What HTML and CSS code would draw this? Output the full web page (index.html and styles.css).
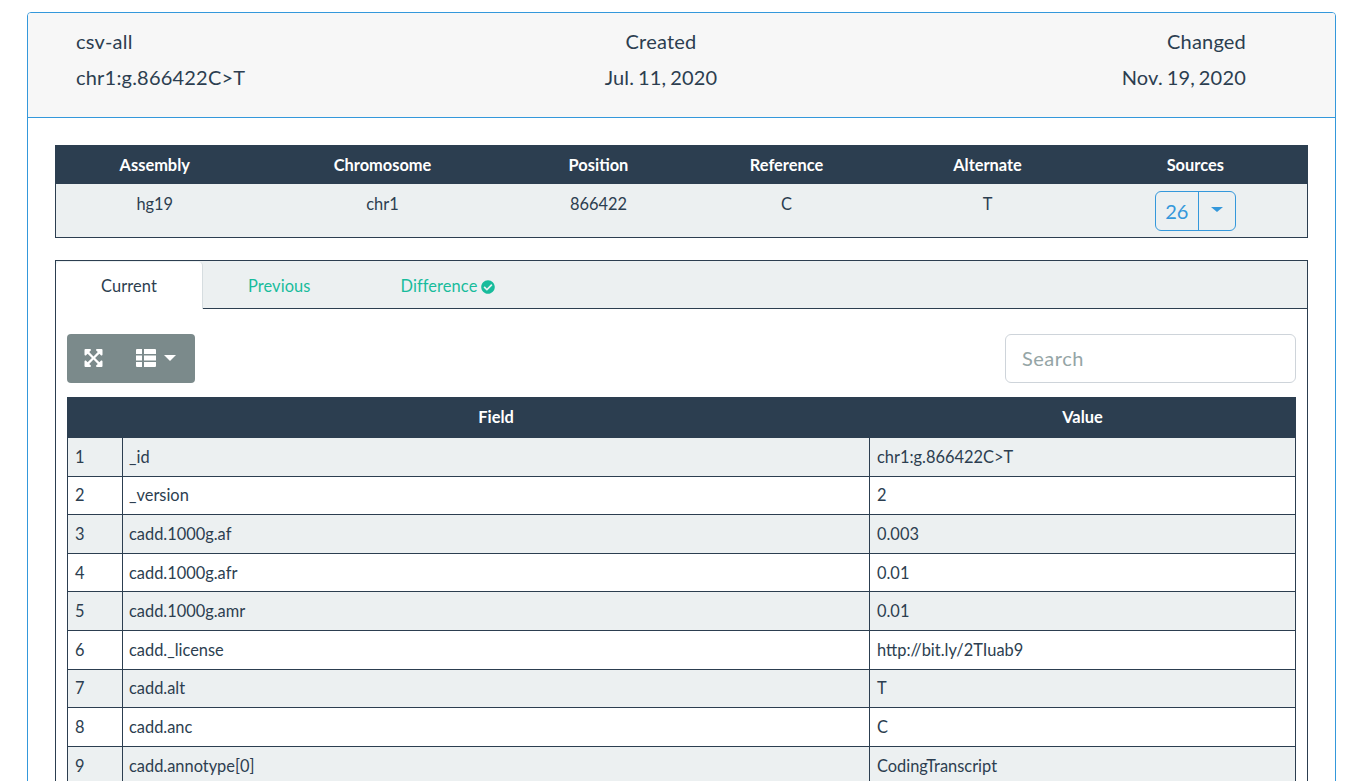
FILE: index.html
```html
<!DOCTYPE html>
<html lang="en">
<head>
<meta charset="utf-8">
<title>chr1:g.866422C&gt;T</title>
<link rel="stylesheet" href="styles.css">
</head>
<body>
<div class="card">
  <div class="card-header">
    <div class="head-col head-left"><div>csv-all</div><div>chr1:g.866422C&gt;T</div></div>
    <div class="head-col head-center"><div>Created</div><div>Jul. 11, 2020</div></div>
    <div class="head-col head-right"><div>Changed</div><div>Nov. 19, 2020</div></div>
  </div>
  <div class="card-body">
    <table class="summary">
      <colgroup><col class="c1"><col class="c2"><col class="c3"><col class="c4"><col class="c5"><col class="c6"></colgroup>
      <thead><tr><th>Assembly</th><th>Chromosome</th><th>Position</th><th>Reference</th><th>Alternate</th><th class="sources">Sources</th></tr></thead>
      <tbody><tr><td>hg19</td><td>chr1</td><td>866422</td><td>C</td><td>T</td>
        <td class="sources"><span class="split-btn"><span class="split-count">26</span><span class="split-caret"><i class="caret caret-blue"></i></span></span></td></tr></tbody>
    </table>
    <div class="tabs-box">
      <div class="tabs">
        <div class="tab active">Current</div>
        <div class="tab">Previous</div>
        <div class="tab tab-diff">Difference<svg class="check" viewBox="0 0 512 512" width="14" height="14"><path fill="#18bc9c" d="M504 256c0 137-111 248-248 248S8 393 8 256 119 8 256 8s248 111 248 248zM227 387l184-184c6-6 6-16 0-22l-23-23c-6-6-16-6-22 0L216 308l-70-70c-6-6-16-6-22 0l-23 23c-6 6-6 16 0 22l104 104c6 6 16 6 22 0z"/></svg></div>
      </div>
      <div class="tab-pane">
        <div class="toolbar">
          <div class="btn-group">
            <span class="tool-btn"><svg viewBox="0 32 448 448" width="19" height="18"><path fill="#fff" d="M448 344v112a23.900 23.900 0 0 1-24 24H312c-21.400 0-32.100-25.900-17-41l36.200-36.200L224 295.600 116.800 402.900 153 439c15.100 15.100 4.400 41-17 41H24a23.900 23.900 0 0 1-24-24V344c0-21.400 25.900-32.100 41-17l36.200 36.200L184.500 256 77.200 148.700 41 185c-15.100 15.100-41 4.400-41-17V56a23.900 23.900 0 0 1 24-24h112c21.400 0 32.100 25.900 17 41l-36.200 36.200L224 216.400l107.300-107.300L295 73c-15.100-15.100-4.400-41 17-41h112a23.900 23.900 0 0 1 24 24v112c0 21.400-25.900 32.100-41 17l-36.200-36.200L263.500 256l107.300 107.300L407 327.100c15.100-15.200 41-4.500 41 16.900z"/></svg></span>
            <span class="tool-btn tool-columns"><svg viewBox="0 0 20 18" width="20" height="18"><path fill="#fff" d="M1 0h5v5H0V1a1 1 0 0 1 1-1zM0 6.500h6v5H0zM0 13h6v5H1a1 1 0 0 1-1-1zM8 0h11a1 1 0 0 1 1 1v4H8zM8 6.500h12v5H8zM8 13h12v4a1 1 0 0 1-1 1H8z"/></svg><i class="caret caret-white"></i></span>
          </div>
          <input class="search" type="text" placeholder="Search">
        </div>
        <table class="data">
          <colgroup><col class="d1"><col class="d2"><col class="d3"></colgroup>
          <thead><tr><th></th><th>Field</th><th>Value</th></tr></thead>
          <tbody>
            <tr><td>1</td><td>_id</td><td>chr1:g.866422C&gt;T</td></tr>
            <tr><td>2</td><td>_version</td><td>2</td></tr>
            <tr><td>3</td><td>cadd.1000g.af</td><td>0.003</td></tr>
            <tr><td>4</td><td>cadd.1000g.afr</td><td>0.01</td></tr>
            <tr><td>5</td><td>cadd.1000g.amr</td><td>0.01</td></tr>
            <tr><td>6</td><td>cadd._license</td><td>http://bit.ly/2TIuab9</td></tr>
            <tr><td>7</td><td>cadd.alt</td><td>T</td></tr>
            <tr><td>8</td><td>cadd.anc</td><td>C</td></tr>
            <tr><td>9</td><td>cadd.annotype[0]</td><td>CodingTranscript</td></tr>
          </tbody>
        </table>
      </div>
    </div>
  </div>
</div>
</body>
</html>
```
FILE: styles.css
```css
html, body { margin: 0; padding: 0; height: 781px; overflow: hidden; background: #fff; }
body { font-family: Lato, "Liberation Sans", sans-serif; font-size: 16.4px; line-height: 24px; color: #2c3e50; }
* { box-sizing: border-box; }

.card { margin: 12px 20px 0 27px; border: 1px solid #3498db; border-radius: 4px; }
.card-header { display: flex; height: 105px; padding: 11px 89px 0 48px; background: #f7f7f7; border-bottom: 1px solid #3498db; border-radius: 3px 3px 0 0; font-size: 20px; line-height: 35.5px; letter-spacing: .2px; word-spacing: -1.5px; }
.head-col { flex: 1 1 0; }
.head-center { text-align: center; }
.head-right { text-align: right; }
.card-body { padding: 27px 27px 0; }

table { border-collapse: collapse; width: 100%; table-layout: fixed; }

.summary { border: 1px solid #2c3e50; }
.summary th { height: 38px; padding: 0; background: #2c3e50; color: #fff; font-weight: 700; text-align: center; }
.summary td { height: 54px; padding: 8px 0 0; background: #ecf0f1; text-align: center; vertical-align: top; }
.c1 { width: 198px; } .c2 { width: 258px; } .c3 { width: 174px; } .c4 { width: 202px; } .c5 { width: 200px; }
.summary .sources { padding-right: 4px; }
.summary td.sources { padding-top: 7px; line-height: 0; }

.split-btn { display: inline-flex; height: 40px; border: 1px solid #3498db; border-radius: 6px; color: #3498db; font-size: 20px; line-height: 38px; }
.split-count { width: 43px; border-right: 1px solid #3498db; text-align: center; }
.split-caret { display: flex; width: 36px; align-items: center; justify-content: center; }
.caret { display: inline-block; width: 0; height: 0; }
.caret-blue { border-left: 6px solid transparent; border-right: 6px solid transparent; border-top: 5px solid #3498db; margin-bottom: 3px; }
.caret-white { border-left: 6.5px solid transparent; border-right: 6.5px solid transparent; border-top: 6px solid #fff; margin-left: 8px; }

.tabs-box { margin-top: 22px; border: 1px solid #2c3e50; }
.tabs { display: flex; height: 48px; background: #ecf0f1; border-bottom: 1px solid #2c3e50; letter-spacing: .1px; }
.tab { height: 47px; padding: 13px 45px 0; color: #18bc9c; }
.tab.active { width: 147px; height: 47px; padding: 13px 0 0; margin-top: 1px; text-align: center; background: #fff; color: #2c3e50; border-right: 1px solid #d6dde0; border-radius: 4px 4px 0 0; line-height: 22px; }
.tab-diff { display: flex; align-items: flex-start; }
.check { margin: 6px 0 0 4px; }

.tab-pane { padding: 25px 11px 0; }
.toolbar { display: flex; justify-content: space-between; align-items: flex-start; margin-bottom: 14px; }
.btn-group { display: flex; width: 128px; height: 49px; padding: 15px 17px 0; align-items: flex-start; background: #7b8a8b; border-radius: 4px; }
.tool-btn { display: flex; align-items: center; }
.tool-btn svg { display: block; }
.tool-columns { margin-left: 33px; }
.search { width: 291px; height: 49px; padding: 0 16px 2px; border: 1px solid #ced4da; border-radius: 6px; font: 20px Lato, sans-serif; letter-spacing: .5px; color: #2c3e50; background: #fff; outline: none; }
.search::placeholder { color: #95a5a6; opacity: 1; }

.data th { height: 40px; padding: 0 0 2px; background: #2c3e50; color: #fff; font-weight: 700; text-align: center; border: 1px solid #2c3e50; }
.data td { height: 38.6px; padding: 0 7px; border: 1px solid #2c3e50; line-height: 24px; }
.data td:nth-child(2) { padding-left: 6px; }
.data tbody tr:nth-child(odd) td { background: #ecf0f1; }
.d1 { width: 55px; } .d2 { width: 747px; }
```
